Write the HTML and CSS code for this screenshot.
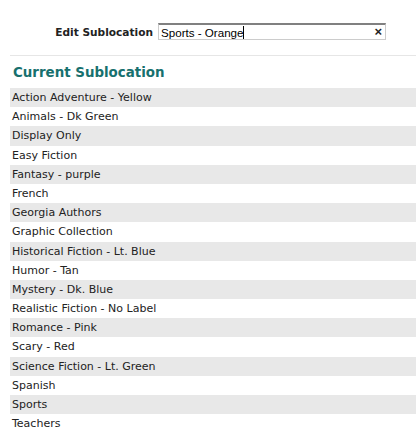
FILE: index.html
```html
<!DOCTYPE html>
<html>
<head>
<meta charset="utf-8">
<link rel="stylesheet" href="styles.css">
</head>
<body>
<div class="edit-row">
  <label class="edit-label">Edit Sublocation</label>
  <div class="input-box">
    <span class="input-text">Sports - Orange</span><span class="caret"></span>
    <span class="clear">×</span>
  </div>
</div>
<hr class="sep">
<h2 class="title">Current Sublocation</h2>
<ul class="list">
  <li>Action Adventure - Yellow</li>
  <li>Animals - Dk Green</li>
  <li>Display Only</li>
  <li>Easy Fiction</li>
  <li>Fantasy - purple</li>
  <li>French</li>
  <li>Georgia Authors</li>
  <li>Graphic Collection</li>
  <li>Historical Fiction - Lt. Blue</li>
  <li>Humor - Tan</li>
  <li>Mystery - Dk. Blue</li>
  <li>Realistic Fiction - No Label</li>
  <li>Romance - Pink</li>
  <li>Scary - Red</li>
  <li>Science Fiction - Lt. Green</li>
  <li>Spanish</li>
  <li>Sports</li>
  <li>Teachers</li>
</ul>
</body>
</html>
```
FILE: styles.css
```css
html, body {
  margin: 0;
  padding: 0;
  background: #fff;
}
body {
  padding-left: 10px;
  font-family: "DejaVu Sans", Verdana, sans-serif;
  color: #222;
  overflow: hidden;
}
.edit-row {
  display: flex;
  align-items: center;
  padding-top: 23px;
  height: 17px;
}
.edit-label {
  width: 143px;
  text-align: right;
  font-weight: bold;
  font-size: 10.6px;
  color: #222;
  padding-right: 5px;
}
.input-box {
  position: relative;
  box-sizing: border-box;
  width: 228px;
  height: 17px;
  border: 1px solid #ccc;
  border-top: 2px solid #808080;
  display: flex;
  align-items: center;
  padding-left: 2px;
  font-family: "Liberation Sans", Arial, sans-serif;
  font-size: 11.6px;
  color: #000;
}
.caret {
  display: inline-block;
  width: 1px;
  height: 13px;
  background: #000;
}
.clear {
  position: absolute;
  right: 3px;
  top: -1px;
  font-weight: bold;
  font-size: 13px;
  color: #222;
}
.sep {
  margin: 15px 0 0 0;
  border: 0;
  border-top: 1px solid #e6e6e6;
  height: 0;
}
.title {
  margin: 0;
  padding: 9px 0 0 3px;
  height: 23px;
  font-size: 13.4px;
  font-weight: bold;
  color: #17706e;
  line-height: 16px;
}
.list {
  list-style: none;
  margin: 0;
  padding: 0;
  margin-top: 0;
}
.list li {
  height: 19.2px;
  line-height: 19.2px;
  padding-left: 2px;
  font-size: 11px;
  color: #222;
}
.list li:nth-child(odd) {
  background: #e8e8e8;
}
```
